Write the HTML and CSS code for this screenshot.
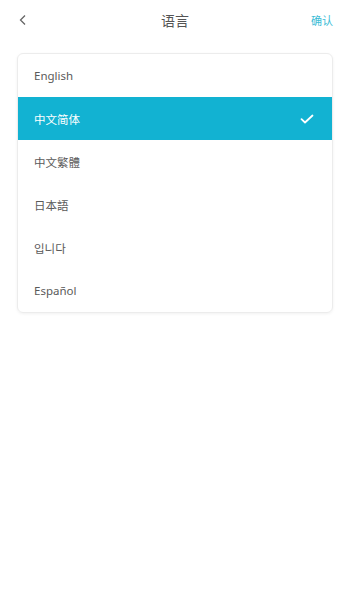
FILE: index.html
```html
<!DOCTYPE html>
<html>
<head>
<meta charset="utf-8">
<link rel="stylesheet" href="styles.css">
</head>
<body>
<div class="page">
  <header class="nav">
    <span class="back">
      <svg width="10" height="12" viewBox="0 0 10 12"><path d="M7 1.5 L2.5 6 L7 10.5" fill="none" stroke="#666" stroke-width="1.3"/></svg>
    </span>
    <span class="title">语言</span>
    <span class="confirm">确认</span>
  </header>
  <div class="card">
    <div class="row">English</div>
    <div class="row active">中文简体
      <svg class="check" width="14" height="10" viewBox="0 0 14 10"><path d="M1.5 5.2 L5 8.5 L12.5 1.5" fill="none" stroke="#fff" stroke-width="1.8" stroke-linecap="round" stroke-linejoin="round"/></svg>
    </div>
    <div class="row">中文繁體</div>
    <div class="row">日本語</div>
    <div class="row">입니다</div>
    <div class="row">Español</div>
  </div>
</div>
</body>
</html>
```
FILE: styles.css
```css
html, body {
  margin: 0;
  padding: 0;
  background: #fff;
}
body {
  font-family: "Noto Sans", "Noto Sans CJK SC", sans-serif;
  width: 350px;
  height: 600px;
  overflow: hidden;
}
.page {
  padding: 0 17px 0 17px;
}
.nav {
  height: 40px;
  display: flex;
  align-items: center;
  justify-content: space-between;
  position: relative;
}
.back {
  display: flex;
  align-items: center;
  margin-left: 1px;
  margin-top: -1px;
}
.title {
  position: absolute;
  left: 0;
  right: 0;
  text-align: center;
  font-size: 14px;
  color: #555;
  font-family: "Noto Sans CJK SC", sans-serif;
  margin-top: -1px;
}
.confirm {
  font-size: 11px;
  color: #3bbcd6;
  font-family: "Noto Sans CJK SC", sans-serif;
  margin-right: 0;
}
.card {
  margin-top: 13px;
  border: 1px solid #ececec;
  border-radius: 6px;
  box-shadow: 0 1px 3px rgba(0,0,0,0.06);
  overflow: hidden;
  width: 314px;
}
.row {
  height: 43px;
  display: flex;
  align-items: center;
  justify-content: space-between;
  padding: 0 17px 0 16px;
  font-size: 11.5px;
  color: #5a5a5a;
  font-family: "Noto Sans", "Noto Sans CJK SC", sans-serif;
}
.row.active {
  background: #12b2d2;
  color: #fff;
}
.check {
  margin-right: 1px;
}
```
